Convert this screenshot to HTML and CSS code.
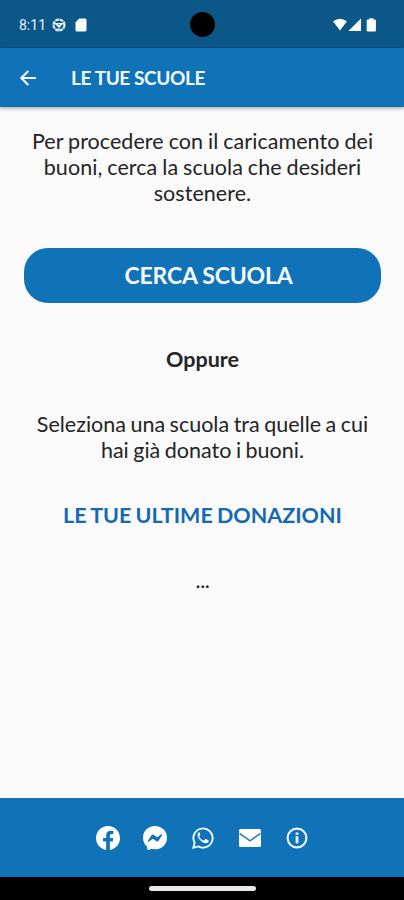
FILE: index.html
```html
<!DOCTYPE html>
<html lang="it">
<head>
<meta charset="utf-8">
<title>Le tue scuole</title>
<link rel="stylesheet" href="styles.css">
</head>
<body>
<div class="status">
  <span class="clock">8:11</span>
  <svg class="globe" viewBox="0 0 14 14"><circle cx="7" cy="7" r="5.500" fill="none" stroke="#e8f1fb" stroke-width="2.200" stroke-dasharray="3.700 .620"/><path d="M2.500 5.700h9M7 7v5M4 6l3 3 3-3" fill="none" stroke="#e8f1fb" stroke-width="1.400"/></svg>
  <svg class="sd" viewBox="0 0 12 14"><path d="M4.200.5H10a1.500 1.500 0 0 1 1.500 1.500v10A1.500 1.500 0 0 1 10 13.500H2A1.500 1.500 0 0 1 .5 12V4.500Z" fill="#fff"/><path d="M4.600 2.300v2M6.700 2.300v2M8.800 2.300v2" stroke="#c9dced" stroke-width=".8"/></svg>
  <span class="camera"></span>
  <svg class="signals" viewBox="0 0 46 14"><path d="M1 3.300Q8 -1.800 15 3.300L8 12.500Z M29 .4V13H16.400Z M37.200 1.400V.3h4.200v1.100h1.400q1.100 0 1.100 1.100v10q0 1.100-1.100 1.100h-7q-1.100 0-1.100-1.100v-10q0-1.100 1.100-1.100Z" fill="#fff"/></svg>
</div>
<header class="appbar">
  <svg class="back" viewBox="0 0 16 16"><path d="M16 8H1.500M8.300 1L1.300 8l7 7" fill="none" stroke="#eef5ff" stroke-width="2.200"/></svg>
  <h1>LE TUE SCUOLE</h1>
</header>
<main>
  <p class="intro">Per procedere con il caricamento dei<br>buoni, cerca la scuola che desideri<br>sostenere.</p>
  <button class="search">CERCA SCUOLA</button>
  <p class="or">Oppure</p>
  <p class="select">Seleziona una scuola tra quelle a cui<br>hai già donato i buoni.</p>
  <h2>LE TUE ULTIME DONAZIONI</h2>
  <p class="dots">...</p>
</main>
<footer>
  <svg viewBox="0 0 24 24"><path fill="#fff" d="M24 12.070C24 5.400 18.630 0 12 0S0 5.400 0 12.070C0 18.100 4.390 23.100 10.130 24v-8.440H7.080v-3.490h3.050V9.410c0-3.020 1.790-4.690 4.530-4.690 1.310 0 2.690.24 2.690.24v2.970h-1.520c-1.490 0-1.960.93-1.960 1.890v2.250h3.330l-.53 3.490h-2.800V24C19.610 23.100 24 18.100 24 12.070z"/></svg>
  <svg viewBox="0 0 24 24"><path fill="#fff" fill-rule="evenodd" d="M12 0C5.240 0 0 4.950 0 11.640c0 3.500 1.430 6.520 3.770 8.610.2.180.32.420.32.690l.07 2.140c.02.680.72 1.120 1.350.85l2.380-1.050c.2-.09.430-.11.640-.05 1.100.3 2.260.46 3.470.46 6.760 0 12-4.950 12-11.640S18.760 0 12 0zM4.800 15.040l3.520-5.590a1.800 1.800 0 0 1 2.600-.48l2.800 2.100a.72.720 0 0 0 .87 0l3.790-2.870c.5-.39 1.160.22.820.75l-3.520 5.590a1.800 1.800 0 0 1-2.600.48l-2.800-2.100a.72.720 0 0 0-.87 0l-3.790 2.870c-.5.390-1.160-.22-.82-.75z"/></svg>
  <svg class="s22" viewBox="0 0 22 22"><path d="M1.300 20.700l1.350-4.950A9.600 9.600 0 1 1 6.300 19.400Z" fill="none" stroke="#f1f7ff" stroke-width="1.900"/><path fill="#fff" d="M7.600 5.400c-.4-.1-.8 0-1.100.3-2.300 2.500-.2 5.300 1.900 7.500 2.500 2.600 5.700 4.300 7.800 2.100.5-.6.600-1.200.5-1.900l-2.700-1.400c-.4-.1-.6 0-.8.300l-1 1.200c-.2.200-.4.200-.7.100-2.100-.9-3.300-2.100-4.200-3.900-.1-.3 0-.5.200-.7.400-.4.900-.9.700-1.400L7.600 5.400Z"/></svg>
  <svg class="mail" viewBox="0 0 22 18"><rect width="22" height="18" rx="1.500" fill="#fff"/><path d="M.5 4.300L11 11.800 21.500 4.300" fill="none" stroke="#2878b8" stroke-width="1.500"/></svg>
  <svg class="info" viewBox="0 0 22 22"><circle cx="11" cy="11" r="9.400" fill="none" stroke="#eef5ff" stroke-width="2.100"/><path d="M11 5.500v2.300M11 9.200v7" stroke="#eef5ff" stroke-width="2.800"/></svg>
</footer>
<div class="nav"><span class="pill"></span></div>
</body>
</html>
```
FILE: styles.css
```css
* { box-sizing: border-box; margin: 0; padding: 0; }
body { width: 404px; height: 900px; display: flex; flex-direction: column; overflow: hidden; background: #fafafa; color: #242424; font-family: Lato, sans-serif; }
svg { display: block; flex: none; }
.status { position: relative; height: 48px; flex: none; background: #0b5788; display: flex; align-items: center; padding: 2px 26px 0 19px; }
.clock { width: 33px; color: #e8f1fb; font: 14px/20px Roboto, sans-serif; }
.globe { width: 14px; height: 14px; }
.sd { width: 12px; height: 14px; margin-left: 9px; }
.camera { position: absolute; left: 190px; top: 12px; width: 25px; height: 25px; border-radius: 50%; background: #000; }
.signals { width: 46px; height: 14px; margin-left: auto; }
.appbar { position: relative; height: 59px; flex: none; background: #1073b8; display: flex; align-items: center; padding: 1px 20px 0; box-shadow: 0 1px 4px rgba(0,0,0,.4); }
.back { width: 16px; height: 16px; }
h1 { margin-left: 35px; color: #f4f8ff; font-size: 19px; line-height: 24px; font-weight: 700; letter-spacing: -.4px; white-space: nowrap; }
main { flex: 1; display: flex; flex-direction: column; align-items: center; padding-top: 21px; text-align: center; white-space: nowrap; font-size: 21.500px; line-height: 26px; }
.intro { padding-left: 1px; letter-spacing: .05px; word-spacing: -.6px; }
.search { width: 357px; height: 55px; margin-top: 42px; border: 0; border-radius: 24px; background: #1073b8; color: #f6faff; font: 700 23px/28px Lato, sans-serif; letter-spacing: -.2px; padding: 0 0 2px 13px; }
.or { margin-top: 43px; padding-left: 1px; font-weight: 700; }
.select { margin-top: 39px; padding-left: 1px; word-spacing: -1px; }
h2 { margin-top: 39px; padding-left: 1px; color: #1569b3; font-size: 21.500px; font-weight: 700; word-spacing: -1px; }
.dots { margin-top: 39px; padding-left: 1px; letter-spacing: -.4px; }
footer { height: 79px; flex: none; background: #1073b8; display: grid; grid-template-columns: repeat(5, 47.250px); align-items: center; justify-content: center; justify-items: center; padding-left: 1px; }
footer svg { width: 24px; height: 24px; }
footer .s22 { width: 22px; height: 22px; }
footer .mail { width: 22px; height: 18px; }
footer .info { width: 22px; height: 22px; }
.nav { height: 23px; flex: none; background: #000; display: flex; justify-content: center; padding-top: 9px; }
.pill { width: 107px; height: 5px; border-radius: 3px; background: #e9e9e9; }
```
